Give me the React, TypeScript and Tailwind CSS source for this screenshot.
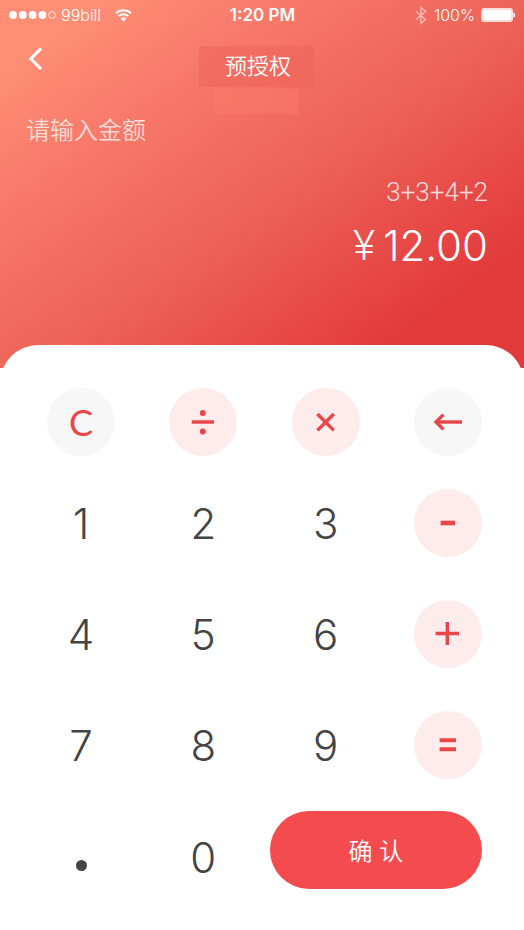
import { useState } from 'react';
import type { ReactNode } from 'react';
import clsx from 'clsx';

const calcular = (expr: string) => {
  const tokens = expr.match(/\d+\.?\d*|[+\-×÷]/g) ?? [];
  const nums: number[] = [];
  let op = '+';
  tokens.forEach((t) => {
    if (/^[+\-×÷]$/.test(t)) {
      op = t;
      return;
    }
    const n = parseFloat(t);
    if (op === '+') nums.push(n);
    if (op === '-') nums.push(-n);
    if (op === '×') nums.push((nums.pop() ?? 0) * n);
    if (op === '÷') nums.push((nums.pop() ?? 0) / n);
  });
  return nums.reduce((a, b) => a + b, 0);
};

const Icon = ({ children }: { children: ReactNode }) => (
  <svg
    width="68"
    height="68"
    viewBox="0 0 68 68"
    fill="none"
    stroke="#e94649"
    strokeWidth="3.4"
    aria-hidden="true"
  >
    {children}
  </svg>
);

const RoundKey = ({
  label,
  gray,
  onClick,
  children,
}: {
  label: string;
  gray?: boolean;
  onClick: () => void;
  children: ReactNode;
}) => (
  <button
    type="button"
    aria-label={label}
    onClick={onClick}
    className={clsx(
      'flex h-[68px] w-[68px] items-center justify-center rounded-full active:opacity-70',
      gray ? 'bg-[#f7f7f7]' : 'bg-[#feecec]'
    )}
  >
    {children}
  </button>
);

const DigitKey = ({
  value,
  tall,
  onPress,
}: {
  value: string;
  tall?: boolean;
  onPress: (v: string) => void;
}) => (
  <button
    type="button"
    onClick={() => onPress(value)}
    className={clsx(
      'flex w-[68px] items-center justify-center text-[42px] font-[350] text-[#444] active:opacity-60',
      tall ? 'h-[92px]' : 'h-[68px]'
    )}
  >
    {value}
  </button>
);

const StatusBar = () => (
  <div className="grid h-[30px] grid-cols-[1fr_auto_1fr] items-center pr-2 pl-[9px] text-base font-light">
    <div className="flex items-center">
      <svg width="47" height="10" viewBox="0 0 47 10" fill="#fff" aria-hidden="true">
        <circle cx="4" cy="5" r="3.9" />
        <circle cx="13.8" cy="5" r="3.9" />
        <circle cx="23.6" cy="5" r="3.9" />
        <circle cx="33.4" cy="5" r="3.9" />
        <circle cx="43" cy="5" r="3.4" fill="none" stroke="#fff" strokeWidth="0.8" />
      </svg>
      <span className="ml-[5px]">99bill</span>
      <svg className="ml-[14px]" width="17" height="13" viewBox="0 0 17 13" fill="none" stroke="#fff" aria-hidden="true">
        <path d="M1 4.2A10.8 10.8 0 0 1 16 4.2" strokeWidth="2" />
        <path d="M3.7 7.2A7 7 0 0 1 13.3 7.2" strokeWidth="2" />
        <path d="M8.5 12.6 5.6 9.6A4.2 4.2 0 0 1 11.4 9.6Z" fill="#fff" stroke="none" />
      </svg>
    </div>
    <span className="text-[17px] leading-[30px] font-semibold">1:20 PM</span>
    <div className="flex items-center justify-end">
      <svg width="12" height="19" viewBox="0 0 12 19" fill="none" stroke="#fff" strokeOpacity="0.5" strokeWidth="1.5" aria-hidden="true">
        <path d="M1 5.2 10.6 13.6 6 17.4V1.6L10.6 5.2 1 13.6" />
      </svg>
      <span className="ml-[7px]">100%</span>
      <svg className="ml-[6px]" width="35" height="14" viewBox="0 0 35 14" aria-hidden="true">
        <rect x="0.5" y="0.5" width="31" height="13" rx="2" fill="none" stroke="#fff" strokeOpacity="0.8" />
        <rect x="1.2" y="1.2" width="29.6" height="11.6" rx="1" fill="#fff" />
        <path d="M32.4 4.4C34.8 5.2 34.8 8.8 32.4 9.6Z" fill="#fff" />
      </svg>
    </div>
  </div>
);

const keyGrid = 'grid grid-cols-[68px_68px_68px_68px] justify-between';

export default function App() {
  const [expr, setExpr] = useState('3+3+4+2');

  const press = (v: string) => setExpr((prev) => prev + v);

  return (
    <div className="min-h-screen bg-white font-['Inter','Noto_Sans_CJK_SC',sans-serif]">
      <header className="h-[368px] bg-[linear-gradient(144deg,#ff8e75_10%,#f7796a_28%,#ee6458_51%,#e2393b_85%,#e2393b_100%)] text-white">
        <StatusBar />

        <div className="grid grid-cols-[1fr_auto_1fr] items-start pt-4">
          <button type="button" aria-label="返回" className="ml-7 w-4">
            <svg width="16" height="26" viewBox="0 0 16 26" fill="none" stroke="#fff" strokeWidth="3" strokeLinecap="round" aria-hidden="true">
              <path d="M12.2 3.4 2.8 12.8 12.2 22.2" />
            </svg>
          </button>
          <h1 className="mr-3 flex h-[41px] w-[115px] items-center justify-center bg-[#ee5f57]/40 pl-1 text-[22px] font-[350]">
            预授权
          </h1>
        </div>
        <div className="mx-auto mt-[2px] h-[25px] w-[85px] -translate-x-[6px] bg-[#ff8570]/30" />

        <p className="px-[26px] pt-px text-2xl leading-8 font-[350] text-white/75">请输入金额</p>

        <div className="mt-[29px] pr-9 text-right font-light">
          <p className="font-['Roboto',sans-serif] text-[26px] leading-8 text-white/80">{expr}</p>
          <p className="mt-4 flex items-center justify-end gap-2 text-[42px] leading-[44px]">
            <span className="font-['Roboto',sans-serif]">¥</span>
            <span className="font-[350]">{calcular(expr).toFixed(2)}</span>
          </p>
        </div>
      </header>

      <main className="relative -mt-[23px] rounded-t-[38px] bg-white pt-[43px] pr-[42px] pb-8 pl-[47px]">
        {/* Fila de funciones */}
        <div className={keyGrid}>
          <RoundKey label="C" gray onClick={() => setExpr('')}>
            <span className="font-['Lato',sans-serif] text-4xl font-normal text-[#e94649]">C</span>
          </RoundKey>
          <RoundKey label="÷" onClick={() => press('÷')}>
            <Icon>
              <path d="M22.7 34H45" />
              <circle cx="33.8" cy="25" r="3" fill="#e94649" stroke="none" />
              <circle cx="33.8" cy="43.4" r="3" fill="#e94649" stroke="none" />
            </Icon>
          </RoundKey>
          <RoundKey label="×" onClick={() => press('×')}>
            <Icon>
              <path d="M25.4 26 41.8 42.4M41.8 26 25.4 42.4" />
            </Icon>
          </RoundKey>
          <RoundKey label="←" gray onClick={() => setExpr((prev) => prev.slice(0, -1))}>
            <Icon>
              <path d="M48 34H22" />
              <path d="M29.4 26.6 22 34 29.4 41.4" />
            </Icon>
          </RoundKey>
        </div>

        <div className={clsx(keyGrid, 'mt-[33px] gap-y-[43px]')}>
          {['1', '2', '3'].map((n) => (
            <DigitKey key={n} value={n} onPress={press} />
          ))}
          <RoundKey label="-" onClick={() => press('-')}>
            <Icon>
              <path d="M26.6 34H41" strokeWidth="4.6" />
            </Icon>
          </RoundKey>
          {['4', '5', '6'].map((n) => (
            <DigitKey key={n} value={n} onPress={press} />
          ))}
          <RoundKey label="+" onClick={() => press('+')}>
            <Icon>
              <path d="M21.6 33.5H45M33.3 22V45" />
            </Icon>
          </RoundKey>
          {['7', '8', '9'].map((n) => (
            <DigitKey key={n} value={n} onPress={press} />
          ))}
          <RoundKey label="=" onClick={() => setExpr((prev) => String(calcular(prev)))}>
            <Icon>
              <path d="M25.6 29.2H42M25.6 38.2H42" strokeWidth="4" />
            </Icon>
          </RoundKey>
        </div>

        <div className={clsx(keyGrid, 'mt-8')}>
          <button
            type="button"
            aria-label="."
            onClick={() => press('.')}
            className="flex h-[92px] items-center justify-center pt-4"
          >
            <span className="h-[11px] w-[11px] rounded-full bg-[#444]" />
          </button>
          <DigitKey value="0" tall onPress={press} />
          <button
            type="button"
            className="col-span-2 h-[78px] w-[212px] justify-self-end rounded-full bg-[#f44b4e] pt-1 text-2xl font-[350] text-white active:opacity-80"
          >
            确 认
          </button>
        </div>
      </main>
    </div>
  );
}
